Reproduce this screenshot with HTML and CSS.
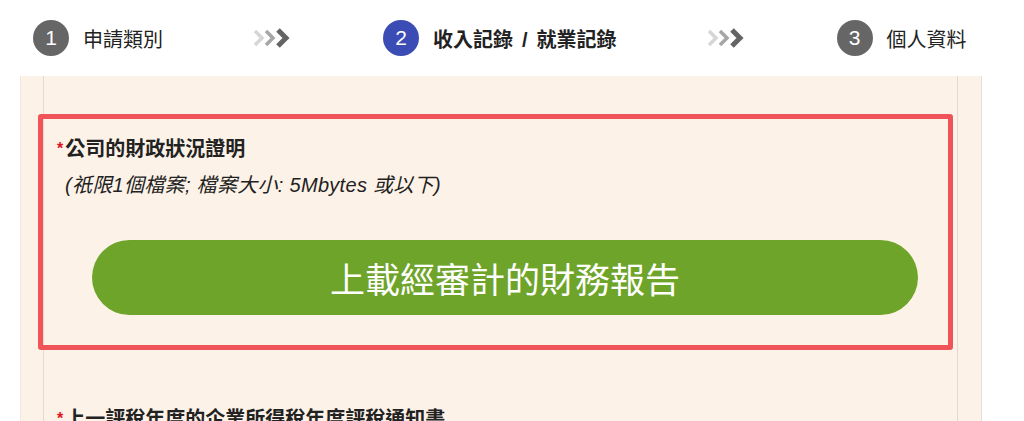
FILE: index.html
```html
<!DOCTYPE html>
<html lang="zh-Hant">
<head>
    <meta charset="UTF-8">
    <meta name="viewport" content="width=device-width, initial-scale=1.0">
    <title>上載文件</title>
    <link rel="stylesheet" href="styles.css">
</head>
<body>
    <div class="steps">
        <div class="step">
            <span class="num">1</span>
            <span class="label">申請類別</span>
        </div>
        <svg class="chev" width="42" height="24" viewBox="0 0 42 24">
            <polyline points="3,5 10,12 3,19" class="c1" />
            <polyline points="14,5 21,12 14,19" class="c2" />
            <polyline points="26,4 34,12 26,20" class="c3" />
        </svg>
        <div class="step active">
            <span class="num">2</span>
            <span class="label">收入記錄<span class="sep">/</span>就業記錄</span>
        </div>
        <svg class="chev" width="42" height="24" viewBox="0 0 42 24">
            <polyline points="3,5 10,12 3,19" class="c1" />
            <polyline points="14,5 21,12 14,19" class="c2" />
            <polyline points="26,4 34,12 26,20" class="c3" />
        </svg>
        <div class="step">
            <span class="num">3</span>
            <span class="label">個人資料</span>
        </div>
    </div>

    <div class="panel">
        <div class="column">
            <div class="field highlight">
                <div class="field-title"><span class="req">*</span>公司的財政狀況證明</div>
                <div class="field-note">(祇限1個檔案; 檔案大小: 5Mbytes 或以下)</div>
                <button class="upload-btn">上載經審計的財務報告</button>
            </div>
            <div class="field">
                <div class="field-title"><span class="req">*</span>上一評稅年度的企業所得稅年度評稅通知書</div>
            </div>
        </div>
    </div>
</body>
</html>
```

FILE: styles.css
```css
* {
    margin: 0;
    padding: 0;
    box-sizing: border-box;
}
body {
    font-family: "Liberation Sans", "Noto Sans CJK TC", sans-serif;
    background: #fff;
    color: #222;
    height: 421px;
    overflow: hidden;
}
.steps {
    display: flex;
    align-items: center;
    gap: 89px;
    height: 76px;
    padding-left: 33px;
}
.step {
    display: flex;
    align-items: center;
    gap: 14px;
}
.num {
    width: 36px;
    height: 36px;
    border-radius: 50%;
    background: #666;
    color: #fff;
    font-size: 21px;
    display: flex;
    align-items: center;
    justify-content: center;
}
.label {
    font-size: 20px;
    color: #222;
}
.sep {
    margin: 0 9px;
}
.step.active .num {
    background: #3b4cb5;
}
.step.active .label {
    font-weight: bold;
}
.chev polyline {
    fill: none;
    stroke-width: 3.5;
}
.chev .c1 { stroke: #d6d6d6; }
.chev .c2 { stroke: #a6a6a6; }
.chev .c3 { stroke: #646464; stroke-width: 5; }
.panel {
    margin-left: 20px;
    width: 962px;
    height: 345px;
    background: #fdf2e7;
    border-left: 1px solid #efe7de;
    border-right: 1px solid #e6e0da;
}
.column {
    margin-left: 22px;
    width: 915px;
    height: 100%;
    border-left: 1px solid #e3dbd2;
    border-right: 1px solid #e3dbd2;
    padding-top: 38px;
}
.field {
    margin: 0 4px 0 -6px;
    padding: 16px 0 30px 14px;
    border: 5px solid transparent;
}
.field.highlight {
    border-color: #f05459;
    border-radius: 3px;
    margin-bottom: 34px;
}
.field-title {
    font-size: 20px;
    font-weight: bold;
    line-height: 28px;
    color: #222;
}
.req {
    color: #e0141e;
    font-size: 16px;
    margin-right: 2px;
    vertical-align: 2px;
}
.field-note {
    font-size: 20px;
    font-style: italic;
    line-height: 28px;
    margin-top: 8px;
    padding-left: 8px;
    letter-spacing: 0.3px;
    color: #222;
}
.upload-btn {
    display: block;
    margin: 41px 0 0 35px;
    width: 826px;
    height: 75px;
    border: none;
    border-radius: 38px;
    background: #6ea42a;
    color: #fff;
    font-family: "Liberation Sans", "Noto Sans CJK TC", sans-serif;
    font-size: 35px;
    cursor: pointer;
}
```
